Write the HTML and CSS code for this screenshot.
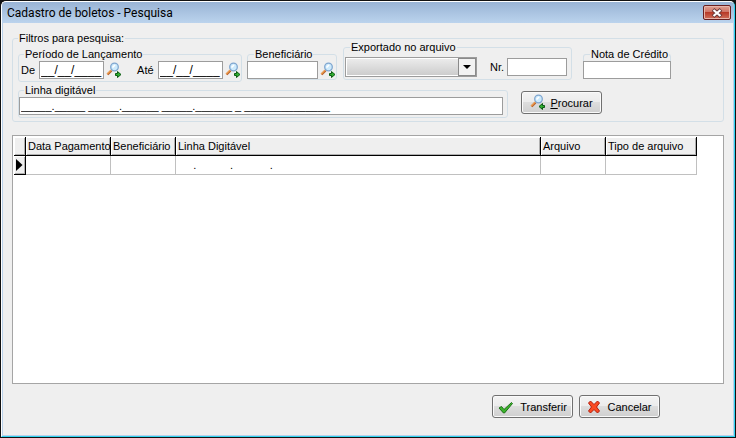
FILE: index.html
```
<!DOCTYPE html>
<html lang="pt-BR">
<head>
	<meta charset="UTF-8">
	<title>Cadastro de boletos - Pesquisa</title>
	<link rel="stylesheet" href="styles.css">
</head>
<body>

<!-- shared icons -->
<svg class="defs" aria-hidden="true">
	<symbol id="lupa" viewBox="0 0 16 17">
		<path d="M1.5 12.5L5.5 8.5" stroke="#b8602a" stroke-width="2.4"/>
		<path d="M1.2 12L5.4 7.8" stroke="#f0a050" stroke-width="1.2"/>
		<circle cx="8.5" cy="5" r="3.8" fill="#cdeafc" stroke="#7fa6cf" stroke-width="1.3"/>
		<path d="M6.5 5.5L9 3" stroke="#fff" stroke-width="1.6"/>
	</symbol>
	<symbol id="seta" viewBox="0 0 16 17">
		<path d="M9.5 11.5H11.5V9.5L15 12.5L11.5 15.5V13.5H9.5Z" fill="#2fae2f" stroke="#0b5a12"/>
	</symbol>
</svg>

<div class="window">
<div class="frame">
	<header class="titlebar">
		<h1>Cadastro de boletos - Pesquisa</h1>
		<button type="button" class="close" aria-label="Fechar">
			<svg width="12" height="10" viewBox="0 0 12 10"><path d="M2 1.5L10 8.5M10 1.5L2 8.5" stroke="#6b3a3a" stroke-width="4"/><path d="M2.5 2L9.5 8M9.5 2L2.5 8" stroke="#fff" stroke-width="2.2"/></svg>
		</button>
	</header>

	<main class="client">
		<form>
		<fieldset class="filters">
			<legend>Filtros para pesquisa:</legend>

			<div class="row">
				<fieldset class="group period">
					<legend>Período de Lançamento</legend>
					<div class="line">
						<label for="de">De</label>
						<input type="text" id="de" class="date" value="__/__/____">
						<button type="button" class="pick" aria-label="Escolher data inicial"><svg width="16" height="17"><use href="#lupa"/><use href="#seta"/></svg></button>
						<label for="ate" class="ate">Até</label>
						<input type="text" id="ate" class="date" value="__/__/____">
						<button type="button" class="pick" aria-label="Escolher data final"><svg width="16" height="17"><use href="#lupa"/><use href="#seta"/></svg></button>
					</div>
				</fieldset>

				<fieldset class="group payee">
					<legend>Beneficiário</legend>
					<div class="line">
						<input type="text" aria-label="Beneficiário">
						<button type="button" class="pick" aria-label="Procurar beneficiário"><svg width="16" height="17"><use href="#lupa"/><use href="#seta"/></svg></button>
					</div>
				</fieldset>

				<fieldset class="group export">
					<legend>Exportado no arquivo</legend>
					<div class="line">
						<div class="combo">
							<select aria-label="Exportado no arquivo"><option></option></select>
							<span class="arrow"><svg width="8" height="4" viewBox="0 0 8 4"><path d="M0 0H8L4 4Z"/></svg></span>
						</div>
						<label for="nr">Nr.</label>
						<input type="text" id="nr">
					</div>
				</fieldset>

				<fieldset class="group credit">
					<legend>Nota de Crédito</legend>
					<input type="text" aria-label="Nota de Crédito">
				</fieldset>
			</div>

			<div class="row second">
				<fieldset class="group digits">
					<legend>Linha digitável</legend>
					<input type="text" aria-label="Linha digitável" value="_____._____ _____.______ _____.______ _ ______________">
				</fieldset>
				<button type="submit" class="btn search">
					<svg width="16" height="17"><use href="#lupa"/><use href="#seta" transform="matrix(-1 0 0 1 24 0)"/></svg>
					<span><u>P</u>rocurar</span>
				</button>
			</div>
		</fieldset>
		</form>

		<div class="grid">
			<table>
				<colgroup>
					<col class="c-mark"><col class="c-date"><col class="c-payee"><col class="c-line"><col class="c-file"><col class="c-type">
				</colgroup>
				<thead>
					<tr><th></th><th>Data Pagamento</th><th>Beneficiário</th><th>Linha Digitável</th><th>Arquivo</th><th>Tipo de arquivo</th></tr>
				</thead>
				<tbody>
					<tr>
						<th class="mark"><svg width="7" height="12" viewBox="0 0 7 12"><path d="M0 0L6.5 6L0 12Z"/></svg></th>
						<td></td>
						<td></td>
						<td class="mask">     .           .            .</td>
						<td></td>
						<td></td>
					</tr>
				</tbody>
			</table>
		</div>

		<footer class="actions">
			<button type="button" class="btn">
				<svg width="16" height="16" viewBox="0 0 16 16"><path d="M1 9L3.5 7.5L6 10.5L13.5 3.5L14.5 4.5L6.5 14H5.5Z" fill="#3cb52c" stroke="#1c6e16"/></svg>
				<span>Transferir</span>
			</button>
			<button type="button" class="btn">
				<svg width="14" height="14" viewBox="0 0 14 14"><path d="M1.5 3L3.5 1L7 4.5L10.5 1L12.5 3L9.5 7L12.5 11L10.5 13L7 9.5L3.5 13L1.5 11L4.5 7Z" fill="#fb4a22" stroke="#b31d0c"/></svg>
				<span>Cancelar</span>
			</button>
		</footer>
	</main>
</div>
</div>

</body>
</html>
```
FILE: styles.css
```
* { box-sizing: border-box; }
body {
	margin: 0;
	background: #111;
	font: 11px/14px "Liberation Sans", Arial, sans-serif;
	color: #000;
}
button, input, select { font: inherit; color: inherit; margin: 0; }
svg { display: block; fill: none; }
.defs { position: absolute; width: 0; height: 0; }

/* window */
.window {
	display: flex;
	min-height: 100vh;
	padding: 1px;
}
.frame {
	flex: 1;
	display: flex;
	flex-direction: column;
	border: 1px solid;
	border-color: #fff #2ed3f0 #2ed3f0 #fff;
	border-radius: 5px 5px 0 0;
	background: #efefef;
	overflow: hidden;
}
.titlebar {
	display: flex;
	align-items: center;
	justify-content: space-between;
	height: 21px;
	padding: 0 3px 0 5px;
	background: linear-gradient(#99b4d5, #bbd3ed);
}
.titlebar h1 {
	margin: 0;
	font: 12px/20px Roboto, "Noto Sans", sans-serif;
}
.close {
	display: flex;
	align-items: center;
	justify-content: center;
	width: 28px;
	height: 15px;
	padding: 0;
	border: 1px solid #6a1f1f;
	border-radius: 2px;
	background: linear-gradient(#e0a294, #cf7466 45%, #b83a28 50%, #d0705c);
	box-shadow: inset 0 0 0 1px #e7b5aa;
}
.client {
	flex: 1;
	display: flex;
	flex-direction: column;
	padding: 8px 9px 17px;
	border: 1px solid #b9d1ea;
	border-top: 0;
}

/* filters */
fieldset {
	min-width: 0;
	margin: 0;
	border: 1px solid #d3dfe7;
	border-radius: 3px;
}
legend {
	padding: 0 1px;
	background: #efefef;
}
.filters { padding: 0 5px 3px; }
.row {
	display: flex;
	align-items: flex-start;
	margin-top: -5px;
}
.row.second { margin-top: 1px; }
.group { margin-top: 7px; padding: 0 2px 2px; }
.group legend { margin-left: 3px; }
.line { display: flex; align-items: center; }
.row input {
	display: block;
	height: 18px;
	padding: 0 2px;
	border: 1px solid #9c9c9c;
	background: #fff;
}
.row .date { width: 65px; margin-left: 4px; padding: 0 1px; font-size: 12px; }
.pick {
	width: 16px;
	height: 17px;
	margin-left: 2px;
	padding: 0;
	border: 0;
	background: none;
}
.period { width: 224px; }
.ate { margin-left: 15px; }
.payee { width: 90px; margin-left: 5px; padding: 0 1px 0 0; }
.payee legend { margin-left: 6px; }
.payee input { width: 71px; margin-left: -1px; }
.export { width: 229px; margin: 0 0 0 6px; padding: 3px 2px 2px 1px; }
.export legend { margin-left: 5px; }
.combo { position: relative; width: 132px; height: 20px; margin-right: 13px; }
.combo select {
	appearance: none;
	display: block;
	width: 100%;
	height: 100%;
	border: 1px solid #9c9c9c;
	background: linear-gradient(#ededed, #cbcbcb);
	box-shadow: inset 0 0 0 1px #fff;
}
.combo .arrow {
	position: absolute;
	top: 1px;
	right: 1px;
	bottom: 1px;
	display: flex;
	align-items: center;
	justify-content: center;
	width: 18px;
	border: 1px solid #8a8a8a;
	background: #f2f2f2;
	pointer-events: none;
}
.combo path, .mark path { fill: #000; }
.row .export input { width: 60px; margin-left: 3px; }
.credit { width: 88px; margin-left: 11px; padding: 0; border-bottom: 0; }
.credit legend { margin-left: 6px; }
.credit input { width: 88px; margin: 0 -1px; }
.digits { width: 490px; margin-top: 0; padding: 0 4px 2px 0; }
.digits legend { margin-left: 5px; }
.row .digits input { width: 100%; padding: 0 1px; }

/* buttons */
.btn {
	display: flex;
	align-items: center;
	justify-content: center;
	gap: 4px;
	width: 81px;
	height: 23px;
	padding: 0;
	border: 1px solid #707070;
	border-radius: 3px;
	background: linear-gradient(#f3f3f3, #ebebeb 50%, #dddddd 50%, #cfcfcf);
	box-shadow: inset 0 0 0 1px #fafafa;
}
.search { margin: 8px 0 0 13px; }

/* result grid */
.grid {
	flex: 1;
	margin-top: 13px;
	padding: 1px;
	border: 1px solid #a5a5a5;
	background: #fff;
	overflow: auto;
}
table {
	table-layout: fixed;
	width: 683px;
	border-collapse: separate;
	border-spacing: 0;
}
.c-mark { width: 12px; }
.c-date { width: 85px; }
.c-payee, .c-file { width: 65px; }
.c-line { width: 365px; }
.c-type { width: 91px; }
th, td {
	height: 19px;
	padding: 0 0 0 2px;
	text-align: left;
	font-weight: normal;
	white-space: nowrap;
}
th {
	border-right: 1px solid #000;
	border-bottom: 1px solid #000;
	background: #efefef;
	box-shadow: inset 1px 1px #fff, inset -1px -1px #b0b0b0;
}
td {
	border-right: 1px solid #c0c0c0;
	border-bottom: 1px solid #c0c0c0;
}
.mask { white-space: pre; }

.actions {
	display: flex;
	justify-content: flex-end;
	gap: 6px;
	margin-top: 11px;
	padding-right: 64px;
}
.actions .btn { gap: 6px; }
```
